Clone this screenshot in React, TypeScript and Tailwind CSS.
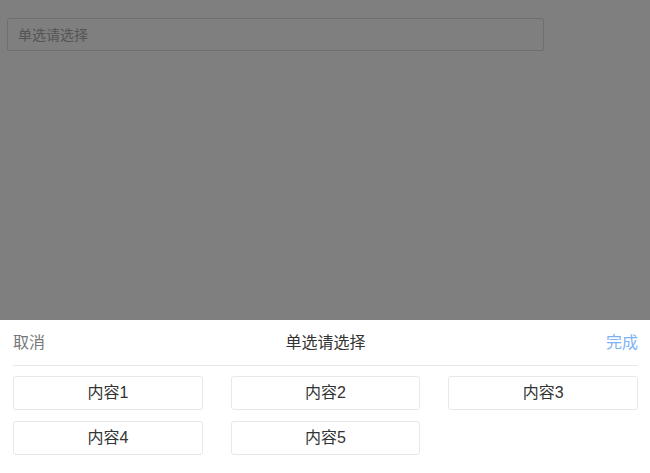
/** Single select picker demo */
const options = ["内容1", "内容2", "内容3", "内容4", "内容5"];

const App = () => {
    return (
        <div
            className="relative h-[473px] w-[650px] overflow-hidden bg-white"
            style={{ fontFamily: '"Liberation Sans", "Noto Sans CJK SC", sans-serif' }}>
            {/* Trigger input */}
            <div className="pt-[18px] pl-[7px]">
                <input
                    type="text"
                    readOnly
                    placeholder="单选请选择"
                    className="h-[33px] w-[537px] rounded-[2px] border border-[#dedede] bg-white px-[10px] text-[14px] text-[#333] placeholder:text-[#aaa] focus:outline-none"
                />
            </div>

            {/* Mask */}
            <div className="absolute inset-0 bg-black/50"></div>

            {/* Bottom sheet */}
            <div className="absolute right-0 bottom-0 left-0 h-[153px] bg-white pr-[12px] pl-[13px]">
                {/* Header */}
                <div className="flex h-[46px] items-center justify-between border-b border-[#e8e8e8] text-[16px]">
                    <span className="text-[#777]">取消</span>
                    <span className="text-[#333]">单选请选择</span>
                    <span className="text-[#7fb2f5]">完成</span>
                </div>

                {/* Options */}
                <div className="mt-[10px] grid grid-cols-3 gap-x-[28px] gap-y-[11px]">
                    {options.map((item) => (
                        <button
                            key={item}
                            className="flex h-[34px] items-center justify-center rounded-[3px] border border-[#e8e8e8] bg-white text-[16px] text-[#333]">
                            {item}
                        </button>
                    ))}
                </div>
            </div>
        </div>
    );
};

export default App;
